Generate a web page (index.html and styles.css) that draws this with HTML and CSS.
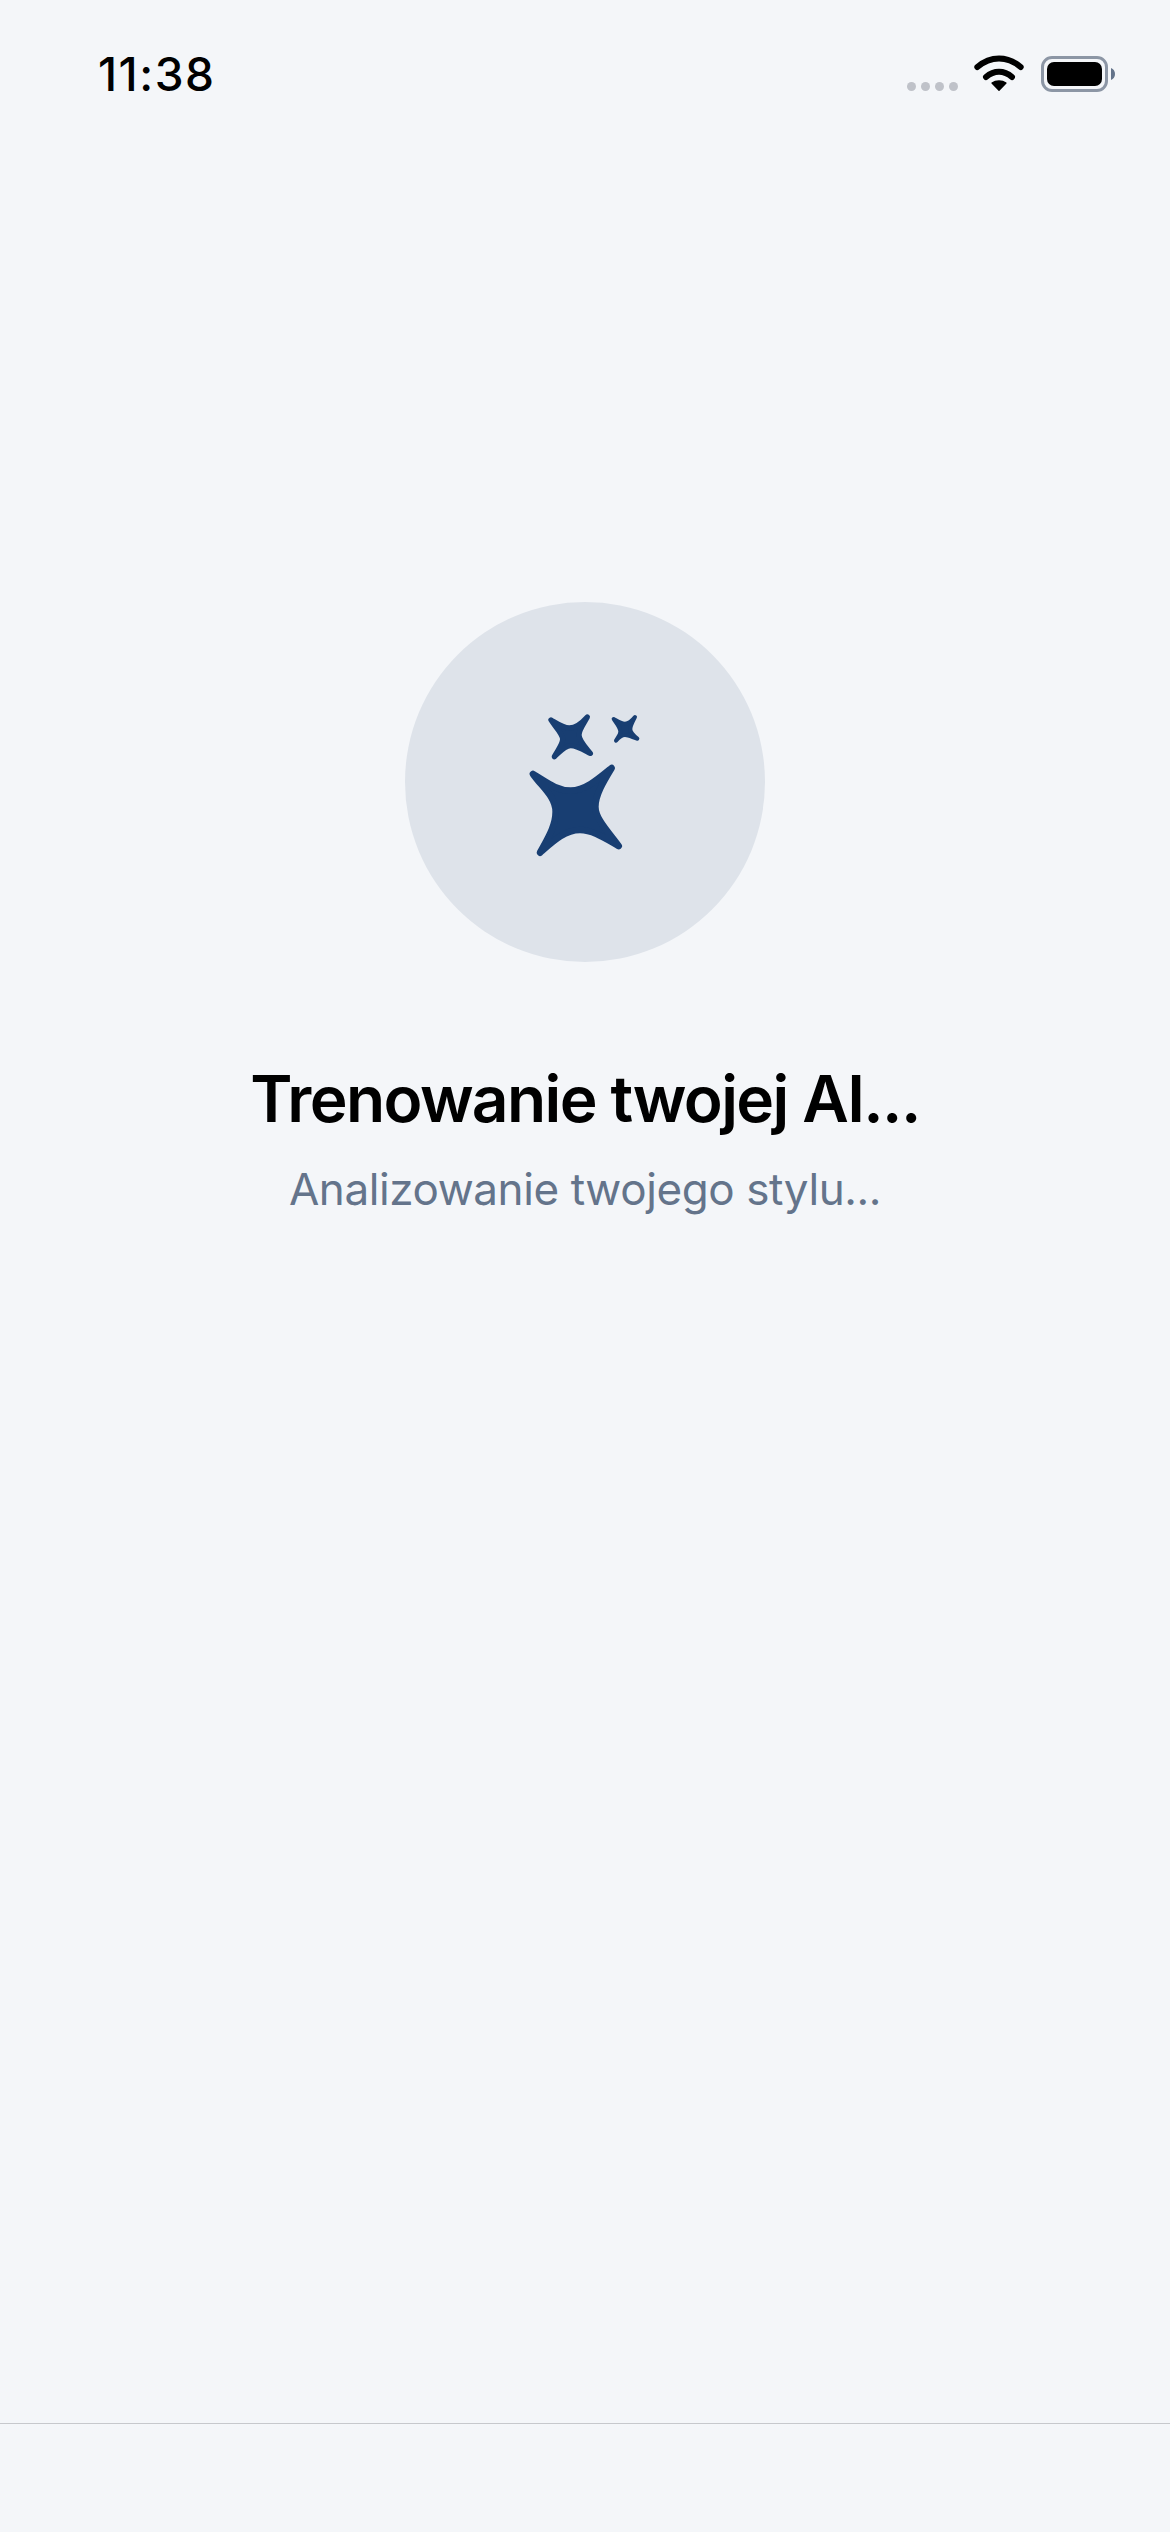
FILE: index.html
```html
<!DOCTYPE html>
<html lang="pl">
<head>
<meta charset="utf-8">
<title>Trenowanie twojej AI</title>
<link rel="stylesheet" href="styles.css">
</head>
<body>
<div class="screen">
  <header class="status-bar">
    <span class="time">11:38</span>
    <div class="status-icons">
      <div class="signal"><i></i><i></i><i></i><i></i></div>
      <svg class="wifi" viewBox="0 0 150 114" width="50" height="38">
        <path class="wifi-arc" d="M10 36C50 2 100 2 140 36"/>
        <path class="wifi-arc" d="M36 66C60 45 90 45 114 66"/>
        <path class="wifi-dot" d="M54 84C66 76 84 76 96 84L75 106Z"/>
      </svg>
      <div class="battery"><div class="battery-fill"></div></div>
      <svg class="battery-cap" viewBox="0 0 4 12" width="4" height="12"><path d="M0 0C2.500 1 4 3 4 6S2.500 11 0 12Z"/></svg>
    </div>
  </header>
  <main class="main">
    <div class="badge">
      <svg class="sparkles" viewBox="0 0 510 552" width="170" height="184">
        <path class="star-lg" d="M99 252C140 277 170 302 212 302C255 302 295 267 335 234C310 275 286 315 286 350C286 385 320 420 356 468C320 448 280 420 240 420C195 420 160 453 120 488C140 450 167 410 167 365C167 320 125 290 99 252Z"/>
        <path class="star-md" d="M153 90C170 100 190 114 208 114C226 114 245 100 262 81C252 100 237 118 237 135C237 152 255 170 271 190C255 182 230 167 212 167C195 167 180 185 163 200C170 185 188 165 188 148C188 130 165 110 153 90Z"/>
        <path class="star-sm" d="M341 87C350 92 362 101 375 101C385 101 396 92 405 81C400 92 391 105 391 118C391 128 402 138 412 146C402 144 386 135 375 135C365 135 355 144 348 152C352 143 361 135 361 125C361 112 348 98 341 87Z"/>
      </svg>
    </div>
    <h1 class="title">Trenowanie twojej AI...</h1>
    <p class="subtitle">Analizowanie twojego stylu...</p>
  </main>
  <footer class="footer"></footer>
</div>
</body>
</html>
```
FILE: styles.css
```css
* { box-sizing: border-box; }
html, body { margin: 0; padding: 0; }
body { background: #f4f6f9; font-family: Inter, "Liberation Sans", sans-serif; }
.screen { height: 2532px; display: flex; flex-direction: column; }
.status-bar { height: 130px; padding: 50px 55px 0 98px; display: flex; justify-content: space-between; align-items: flex-start; }
.time { font-size: 46px; font-weight: 500; line-height: 48px; letter-spacing: 1.500px; color: #000; }
.status-icons { display: flex; align-items: flex-start; }
.signal { display: flex; gap: 5px; margin: 32px 16px 0 0; }
.signal i { width: 9px; height: 9px; border-radius: 50%; background: #bfc2c9; }
.wifi { display: block; margin: 5px 17px 0 0; }
.wifi-arc { fill: none; stroke: #000; stroke-width: 18; stroke-linecap: round; }
.wifi-dot { fill: #000; stroke: #000; stroke-width: 4; stroke-linejoin: round; }
.battery { width: 67px; height: 36px; margin-top: 6px; border: 3px solid #8c96a5; border-radius: 11px; padding: 3px; }
.battery-fill { height: 100%; background: #000; border-radius: 7px; }
.battery-cap { display: block; margin: 18px 0 0 3px; fill: #64748b; }
.main { flex: 1; display: flex; flex-direction: column; align-items: center; padding-top: 472px; }
.badge { width: 360px; height: 360px; border-radius: 50%; background: #dee3ea; display: flex; align-items: center; justify-content: center; }
.sparkles { display: block; fill: #183e72; stroke: #183e72; stroke-linejoin: round; }
.star-lg { stroke-width: 20; }
.star-md { stroke-width: 16; }
.star-sm { stroke-width: 12; }
.title { margin: 98px 0 0; font-size: 64px; font-weight: 600; line-height: 78px; letter-spacing: -1.6px; color: #000; }
.subtitle { margin: 24px 0 0; font-size: 44px; font-weight: 400; line-height: 54px; letter-spacing: -0.4px; color: #64748b; }
.footer { height: 109px; border-top: 1px solid #c6c8cc; }
```
